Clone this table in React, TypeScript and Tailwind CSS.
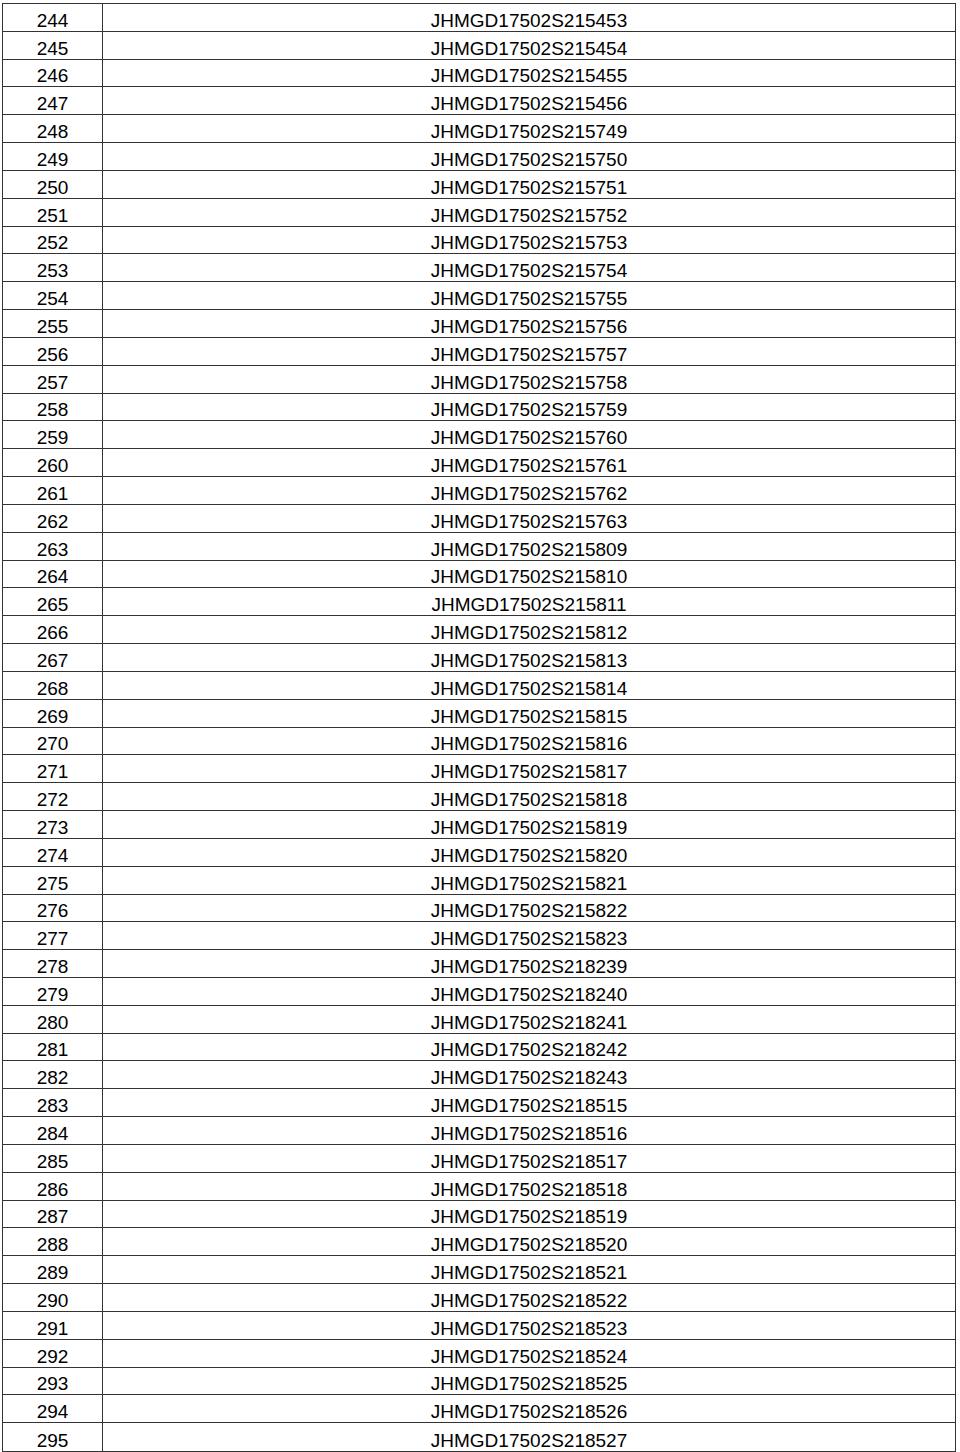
import React from "react";

const codes: string[] = [
  "215453","215454","215455","215456","215749","215750","215751","215752","215753","215754",
  "215755","215756","215757","215758","215759","215760","215761","215762","215763","215809",
  "215810","215811","215812","215813","215814","215815","215816","215817","215818","215819",
  "215820","215821","215822","215823","218239","218240","218241","218242","218243","218515",
  "218516","218517","218518","218519","218520","218521","218522","218523","218524","218525",
  "218526","218527",
];

export default function App() {
  return (
    <div className="w-[960px] h-[1452px] bg-white pt-[3px] pl-[2px]" style={{ fontFamily: '"Liberation Sans", Arial, sans-serif' }}>
      <div className="w-[954px] border border-[#333] text-[19px] text-black">
        {codes.map((c, i) => (
          <div key={i} className={`flex h-[27.83px] ${i < codes.length - 1 ? "border-b border-[#333]" : ""}`}>
            <div className="w-[100px] border-r border-[#333] flex items-end justify-center pb-[1px] leading-none">
              {244 + i}
            </div>
            <div className="flex-1 flex items-end justify-center pb-[1px] leading-none">
              JHMGD17502S{c}
            </div>
          </div>
        ))}
      </div>
    </div>
  );
}
